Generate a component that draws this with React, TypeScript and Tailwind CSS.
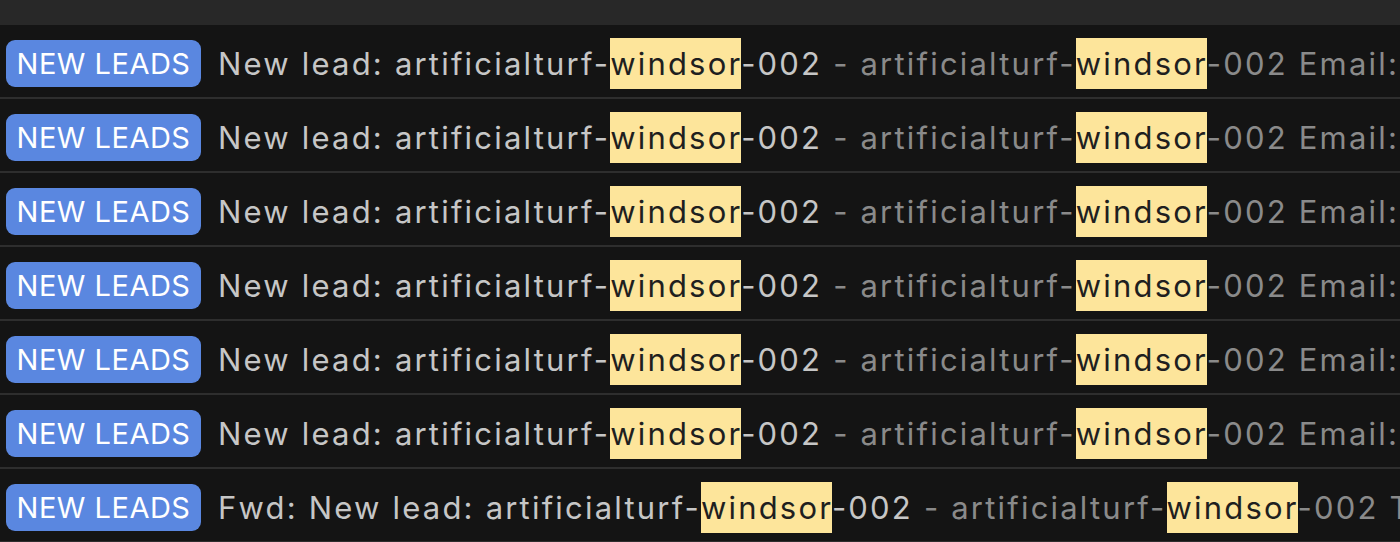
const rows = [
  { fwd: false },
  { fwd: false },
  { fwd: false },
  { fwd: false },
  { fwd: false },
  { fwd: false },
  { fwd: true },
];

function Hl({ children }: { children: string }) {
  return <span className="bg-[#fde59b] text-[#1f1f1f] py-[7px]">{children}</span>;
}

export default function App() {
  return (
    <div
      className="w-[1400px] h-[542px] overflow-hidden bg-[#141414]"
      style={{ fontFamily: "Inter, 'Noto Sans', sans-serif" }}
    >
      <div className="h-[25px] bg-[#282828]" />
      {rows.map((r, i) => (
        <div
          key={i}
          className="h-[74px] border-b-2 border-[#2e2e2e] flex items-center pt-[4px] pl-[6px] whitespace-nowrap overflow-hidden"
        >
          <span className="shrink-0 w-[195px] h-[47px] rounded-[9px] bg-[#5a87e0] text-white text-[29px] tracking-[0.5px] leading-none flex items-center justify-center">
            NEW LEADS
          </span>
          <span className="ml-[17px] text-[31px] tracking-[2.2px] leading-none text-[#c6c6c6]">
            {r.fwd ? "Fwd: " : ""}New lead: artificialturf-<Hl>windsor</Hl>-002
            <span className="text-[#8a8a8a]">
              {" "}- artificialturf-<Hl>windsor</Hl>-002 {r.fwd ? "Tue" : "Email:"}
            </span>
          </span>
        </div>
      ))}
    </div>
  );
}
